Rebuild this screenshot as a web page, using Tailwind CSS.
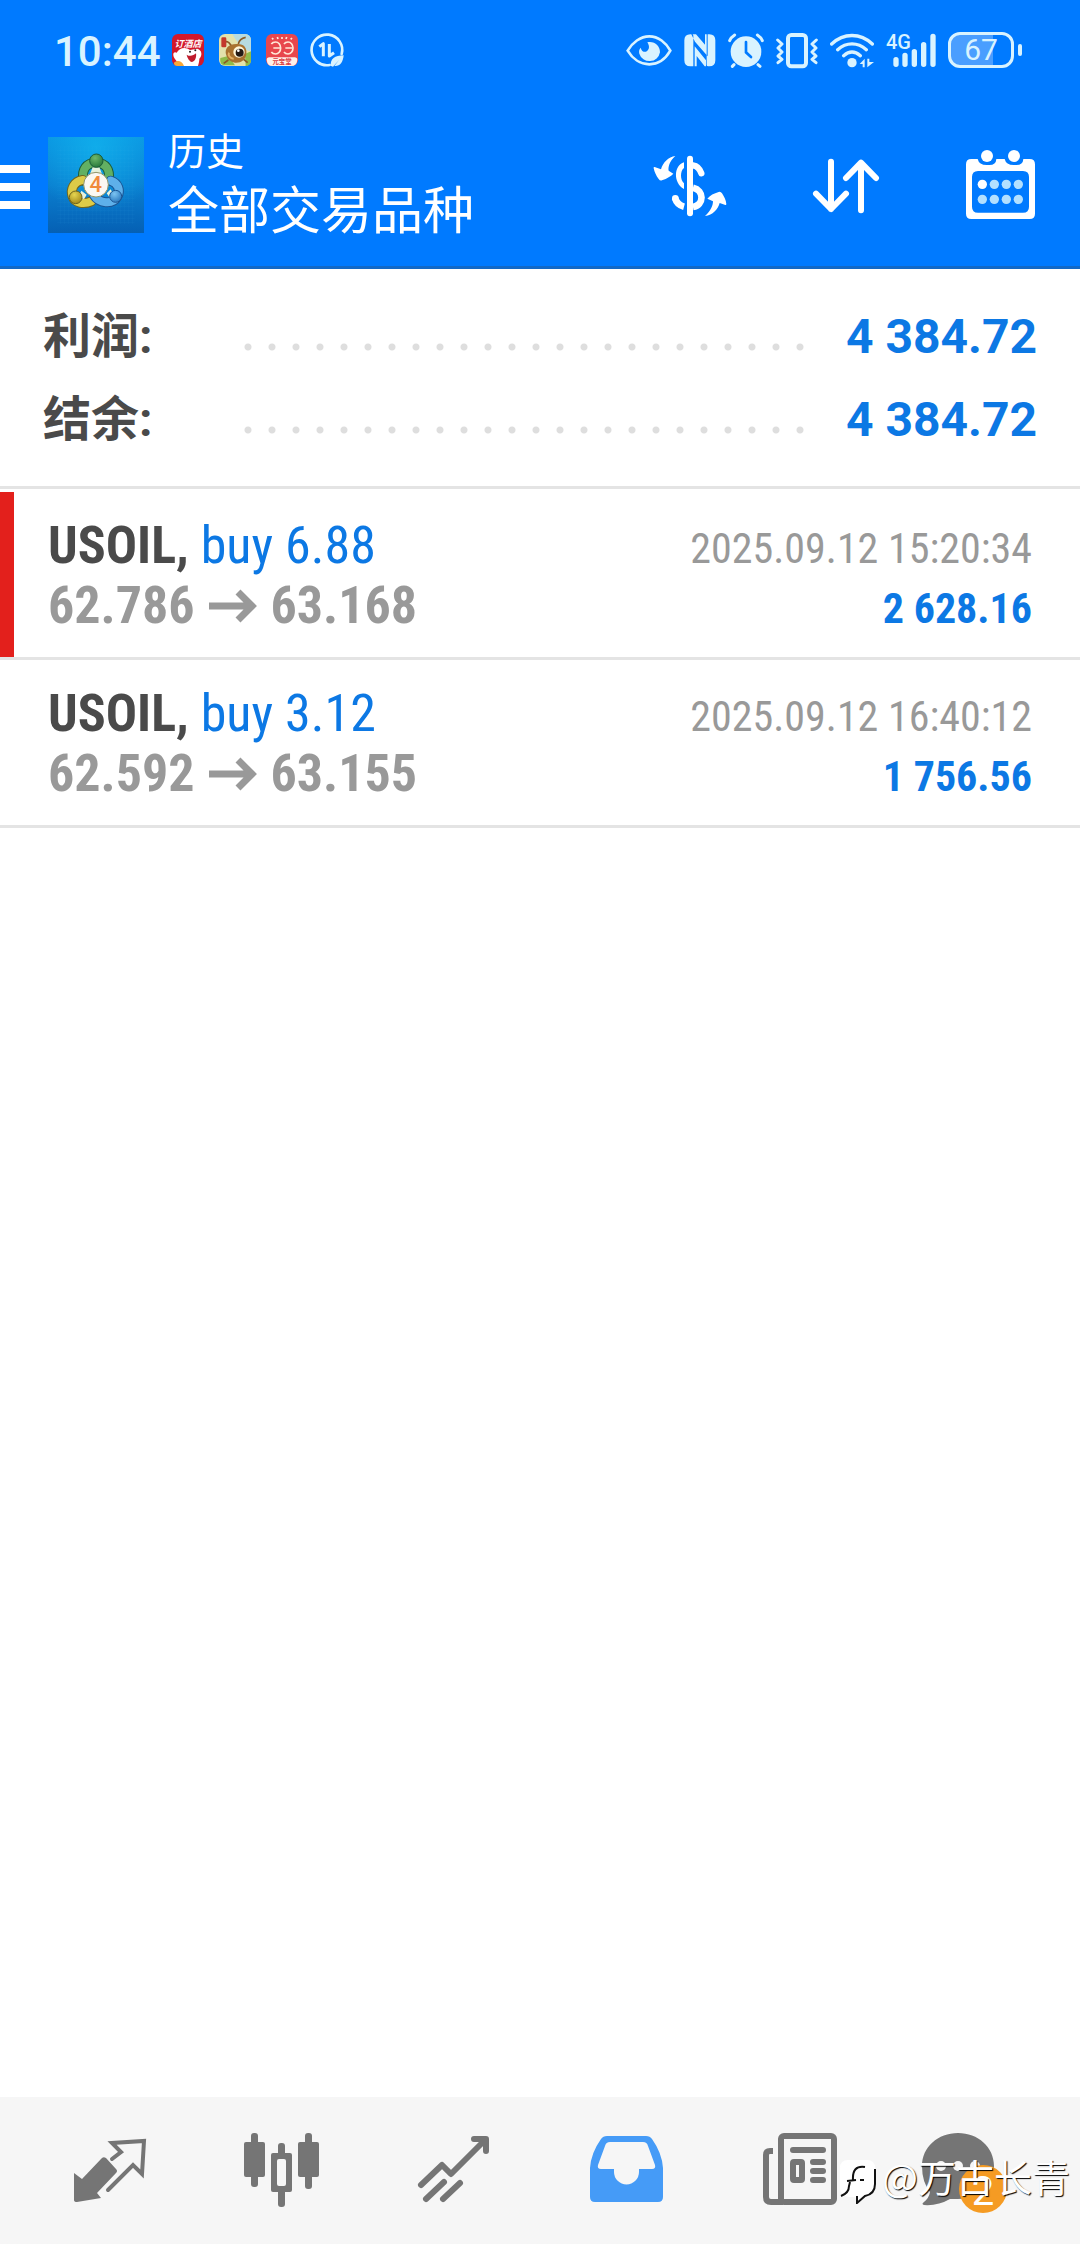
<!DOCTYPE html>
<html lang="zh-CN">
<head>
    <meta charset="UTF-8" />
    <meta name="viewport" content="width=device-width, initial-scale=1.0">
    <title>历史</title>
    <script src="https://cdn.jsdelivr.net/npm/@tailwindcss/browser@4"></script>
</head>
<body class="relative flex min-h-screen flex-col bg-white font-[Roboto,'Noto_Sans_CJK_SC',sans-serif] text-[#4a4a4a]">
    <header class="border-b-3 border-[#1269c7] bg-[#007aff] text-white">
        <!-- Status bar -->
        <div class="flex h-25 items-center justify-between pr-[58px] pl-[54px] text-[#d9f3ff]">
            <div class="flex items-center gap-[15px]">
                <span class="-mr-1 pt-1 text-[42px] leading-none font-medium">10:44</span>
                <svg class="size-8" viewBox="0 0 96 96">
                    <rect width="96" height="96" rx="18" fill="#d3182b" />
                    <text x="48" y="38" font-size="27" font-weight="700" font-style="italic" text-anchor="middle" fill="#fff">订酒店</text>
                    <path d="M14 56c8-16 28-18 40-8l22-4c14 4 16 20 6 30 0 8-2 14-4 22H22c-2-12-16-18-18-32-1-8 4-12 10-8z" fill="#fff" />
                    <path d="M44 62c8 6 20 4 28-4 2 12-2 24-12 26-8-2-14-12-16-22z" fill="#c01c2c" />
                    <circle cx="54" cy="53" r="3" fill="#222" /><circle cx="70" cy="49" r="3" fill="#222" />
                    <path d="M6 86c8-8 24-8 30 10H16C10 96 5 92 6 86z" fill="#f6a83a" />
                </svg>
                <svg class="size-8" viewBox="0 0 96 96">
                    <rect width="96" height="96" rx="18" fill="#e3e2ac" />
                    <path d="M40 0h38a18 18 0 0 1 18 18v34C76 50 56 30 40 0z" fill="#b7dbe0" />
                    <path d="M4 72l24-6 20 28H18C8 94 2 86 4 72zM78 60l18-8v28c0 8-6 16-16 16z" fill="#8fbb4a" />
                    <path d="M22 64c-8-22 10-36 34-34 20 0 28 12 26 30-2 18-18 28-34 26-14-2-22-10-26-22z" fill="#a8712f" />
                    <path d="M36 34c-8-12-14-14-20-8M58 30c2-10 10-18 22-20M28 78L14 88M74 76l12 10" stroke="#8a5a26" stroke-width="5" fill="none" />
                    <circle cx="60" cy="54" r="17" fill="#fff6d8" /><circle cx="62" cy="56" r="12" fill="#241a14" /><circle cx="58" cy="50" r="4" fill="#fff" />
                    <path d="M30 56c-4 8 4 18 14 18" stroke="#e2b063" stroke-width="6" fill="none" />
                    <rect x="7" y="10" width="15" height="30" rx="4" fill="#c3382c" />
                </svg>
                <svg class="size-8" viewBox="0 0 96 96">
                    <rect width="96" height="96" rx="18" fill="#e8474d" />
                    <g fill="none" stroke="#ffe9d8" stroke-width="5">
                        <path d="M16 30q4-6 13-6a15 18 0 0 1 0 36q-9 0-13-6M22 42h20M54 30q4-6 12-6a15 18 0 0 1 0 36q-8 0-12-6M58 42h20" />
                        <path d="M18 12l4 4M34 9l2 6M48 9v6M62 9l-2 6M78 12l-4 4" />
                    </g>
                    <path d="M2 78q0-8 8-8h76q8 0 8 8-2 18-18 18H18Q4 96 2 78z" fill="#fff0ea" />
                    <text x="48" y="90" font-size="19" font-weight="700" text-anchor="middle" fill="#d93a40">元宝堂</text>
                </svg>
                <svg class="-ml-1 size-9" viewBox="0 0 108 108" fill="none" stroke="currentColor">
                    <path d="M98 66a46 46 0 1 0-36 33" stroke-width="8" stroke-linecap="round" />
                    <path d="M31 44l12-9v38M61 36v36l14-10" stroke-width="9" stroke-linejoin="round" />
                    <path d="M66 102c-4-20 12-32 38-32-2 22-12 34-28 32l14-18-18 20z" fill="currentColor" stroke="none" />
                </svg>
            </div>
            <div class="flex items-center gap-3">
                <svg class="h-10 w-[46px]" viewBox="80 90 138 120" fill="none" stroke="currentColor">
                    <path d="M85 152c14-24 38-43 65-43s50 19 63 43c-14 24-36 41-63 41s-51-17-65-41z" stroke-width="8" />
                    <path d="M144 127c22-4 38 10 38 30a32 32 0 0 1-62 4c-2-8 0-14 4-18 2 10 10 14 16 12 10-4 12-16 4-28z" fill="currentColor" stroke="none" />
                </svg>
                <svg class="h-10 w-8" viewBox="254 90 96 120">
                    <path d="M273 103q-18 0-18 18v60q0 18 18 18h9v-92q0-4-4-4zM330 199q18 0 18-18v-60q0-18-18-18h-8v92q0 4 5 4zM276 103h14l27 31v-31h8v66l-38-44zM286 199V139l34 42v18h-4l-24-31v31z" fill="currentColor" />
                </svg>
                <svg class="h-10 w-9" viewBox="384 90 108 120" fill="none" stroke="currentColor" stroke-linecap="round">
                    <circle cx="438" cy="155" r="46" fill="currentColor" stroke="none" />
                    <path d="M389 122q4-10 15-17M487 122q-4-10-15-17M402 194l-5 5M474 194l6 5" stroke-width="9" />
                    <path d="M438 126v31l15 14" stroke="#007aff" stroke-width="8" />
                </svg>
                <svg class="h-10 w-[42px]" viewBox="528 90 126 120" fill="none" stroke="currentColor" stroke-linejoin="round" stroke-linecap="round">
                    <rect x="564" y="105" width="54" height="94" rx="10" stroke-width="12" />
                    <path d="M533 120l13 12-12 12 12 12-12 12 12 10-12 10M649 120l-13 12 12 12-12 12 12 12-12 10 12 10" stroke-width="9" />
                </svg>
                <svg class="h-10 w-11" viewBox="690 90 132 120" fill="none" stroke="currentColor" stroke-linecap="round">
                    <path d="M695 132c36-34 86-34 122 0M713 149c26-23 60-23 86 0M731 167c16-14 34-14 50 0" stroke-width="10" />
                    <circle cx="756" cy="188" r="14" fill="currentColor" stroke="none" />
                    <path d="M794 176v26h-6v-10h-9zM802 202v-26h6v10h14z" fill="currentColor" stroke="none" />
                </svg>
                <div class="relative h-10 w-[50px]">
                    <span class="absolute top-0.5 left-0 text-[20px] leading-5 font-medium">4G</span>
                    <svg class="h-10 w-[50px]" viewBox="858 90 150 120" stroke="currentColor" stroke-width="16" stroke-linecap="round">
                        <path d="M888 179v14M915 166v27M943 155v38M971 134v59M999 109v84" />
                    </svg>
                </div>
                <div class="flex items-center gap-1">
                    <span class="flex h-9 w-[66px] items-center justify-center rounded-[12px] border-3 border-current bg-linear-to-r from-[#4a9eff] from-70% to-transparent to-70% text-[30px] leading-none">67</span>
                    <span class="h-3 w-1 rounded-full bg-current"></span>
                </div>
            </div>
        </div>

        <!-- Toolbar -->
        <div class="flex h-[166px] items-center pt-1 pr-11">
            <button type="button" aria-label="菜单" class="flex flex-col gap-2.5 pt-1">
                <span class="h-2 w-[30px] bg-white"></span>
                <span class="h-2 w-[30px] bg-white"></span>
                <span class="h-2 w-[30px] bg-white"></span>
            </button>
            <svg class="ml-[18px] size-24" viewBox="12 21 288 288">
                <defs>
                    <linearGradient id="sky" x1="0" y1="0" x2="0" y2="1"><stop offset="0" stop-color="#0a93e0" /><stop offset="0.5" stop-color="#0a7fd0" /><stop offset="1" stop-color="#0560b4" /></linearGradient>
                    <radialGradient id="glow" cx="0.5" cy="0.1" r="0.7"><stop offset="0" stop-color="#12b8f0" stop-opacity="0.7" /><stop offset="1" stop-color="#12b8f0" stop-opacity="0" /></radialGradient>
                    <radialGradient id="green" cx="0.4" cy="0.3" r="0.8"><stop offset="0" stop-color="#6fb86a" /><stop offset="1" stop-color="#1f7034" /></radialGradient>
                    <radialGradient id="yellow" cx="0.4" cy="0.3" r="0.8"><stop offset="0" stop-color="#e6d550" /><stop offset="1" stop-color="#9c8216" /></radialGradient>
                    <radialGradient id="blue" cx="0.4" cy="0.3" r="0.8"><stop offset="0" stop-color="#7cc4f2" /><stop offset="1" stop-color="#2272ba" /></radialGradient>
                    <pattern id="grid" width="12" height="12" patternUnits="userSpaceOnUse"><path d="M0 0h12M0 0v12" stroke="#3bb4ee" stroke-opacity="0.25" /></pattern>
                </defs>
                <rect x="12" y="21" width="288" height="288" fill="url(#sky)" />
                <rect x="12" y="21" width="288" height="288" fill="url(#glow)" />
                <rect x="40" y="50" width="232" height="232" fill="url(#grid)" />
                <g fill="none" stroke-linecap="round">
                    <path d="M118 152c-6-34 10-54 38-54s44 20 38 54" stroke="#1c5c38" stroke-width="30" />
                    <path d="M118 152c-6-34 10-54 38-54s44 20 38 54" stroke="#62b062" stroke-width="24" />
                    <path d="M116 150c-26 4-38 28-30 50 8 20 34 24 56 14" stroke="#6f651e" stroke-width="30" />
                    <path d="M116 150c-26 4-38 28-30 50 8 20 34 24 56 14" stroke="#dccb48" stroke-width="24" />
                    <path d="M200 152c24 8 30 30 20 48-14 26-56 20-70-4" stroke="#1b5594" stroke-width="30" />
                    <path d="M200 152c24 8 30 30 20 48-14 26-56 20-70-4" stroke="#5eb0ea" stroke-width="24" />
                </g>
                <path d="M146 112h20l8 20h-36zM112 182l16 12-8 14-16-8zM200 178l-12 12 12 16 12-6z" fill="#e6f2dc" />
                <circle cx="157" cy="92" r="20" fill="url(#green)" stroke="#1c5c38" stroke-width="3" />
                <circle cx="95" cy="202" r="19" fill="url(#yellow)" stroke="#6f651e" stroke-width="3" />
                <circle cx="215" cy="199" r="18" fill="url(#blue)" stroke="#1b5594" stroke-width="3" />
                <circle cx="156" cy="164" r="37" fill="#fbf8f2" stroke="#8f9468" stroke-width="3" />
                <text x="155" y="187" text-anchor="middle" font-size="66" font-weight="500" fill="#f08a3c">4</text>
            </svg>
            <div class="ml-6 flex-1">
                <h1 class="text-[38px] leading-[54px]">历史</h1>
                <p class="text-[51px] leading-[66px]">全部交易品种</p>
            </div>
            <div class="flex items-center gap-20">
                <button type="button" aria-label="入金出金">
                    <svg class="h-18 w-20" viewBox="96 114 240 216" fill="none" stroke="currentColor">
                        <path d="M210 143v164" stroke-width="18" stroke-linecap="round" />
                        <path d="M192 154c-30 8-34 62 0 80v-17c-12-10-12-38 0-46z" fill="currentColor" stroke="none" />
                        <path d="M219 163c14 2 21 12 25 24" stroke-width="19" stroke-linecap="round" />
                        <path d="M219 230c34 8 34 52 0 58" stroke-width="20" />
                        <path d="M165 261c4 14 12 22 27 26" stroke-width="20" />
                        <circle cx="166" cy="262" r="10" fill="currentColor" stroke="none" />
                        <path d="M166 135c-18 16-22 34-20 44l14 9c-8 8-18 14-34 20q-6 2-10-4c-8-10-12-20-15-32q-1-6 5-3l17 6c6-20 22-38 43-40zM255 315c18-16 24-32 24-44l-17-8c8-10 20-16 34-20q6-2 10 4c6 10 12 20 13 32q0 4-5 2l-15-5c-6 20-20 36-44 39z" fill="currentColor" stroke="none" />
                    </svg>
                </button>
                <button type="button" aria-label="排序">
                    <svg class="size-18" viewBox="576 114 216 216" fill="none" stroke="currentColor" stroke-width="18" stroke-linecap="round" stroke-linejoin="round">
                        <path d="M633 152v142M588 248l45 46 45-46M723 298V156M678 201l45-46 45 46" />
                    </svg>
                </button>
                <button type="button" aria-label="选择日期">
                    <svg class="size-18" viewBox="1032 114 216 216" fill="currentColor">
                        <path fill-rule="evenodd" d="M1054 144h19q4 18 27 18h8q20 0 21-18h25q4 18 27 18h8q20 0 21-18h19q16 0 16 16v148q0 16-16 16h-175q-16 0-16-16V160q0-16 16-16zM1074 180q-18 0-18 18v89q0 18 18 18h135q18 0 18-18v-89q0-18-18-18z" />
                        <circle cx="1101" cy="135" r="18" /><circle cx="1182" cy="135" r="18" /><circle cx="1087" cy="220" r="14" />
                        <g fill="#b3e0ff">
                            <circle cx="1123" cy="220" r="14" /><circle cx="1159" cy="220" r="14" /><circle cx="1195" cy="220" r="14" />
                            <circle cx="1087" cy="265" r="14" /><circle cx="1123" cy="265" r="14" /><circle cx="1159" cy="265" r="14" /><circle cx="1195" cy="265" r="14" />
                        </g>
                    </svg>
                </button>
            </div>
        </div>
    </header>

    <main class="flex-1">
        <!-- Totals -->
        <dl class="border-b-3 border-[#e4e4e4] px-[43px] pt-[26px] pb-[25px] text-[48px] leading-[83px] font-bold">
            <div class="flex items-center">
                <dt class="w-[193px]">利润:</dt>
                <dd class="flex flex-1 items-center gap-8 text-[#0c78e4]">
                    <span class="mt-5 h-6 flex-1 bg-[radial-gradient(circle,#dedede_3px,transparent_4px)] bg-size-[24px_24px]"></span>
                    <span>4 384.72</span>
                </dd>
            </div>
            <div class="flex items-center">
                <dt class="w-[193px]">结余:</dt>
                <dd class="flex flex-1 items-center gap-8 text-[#0c78e4]">
                    <span class="mt-5 h-6 flex-1 bg-[radial-gradient(circle,#dedede_3px,transparent_4px)] bg-size-[24px_24px]"></span>
                    <span>4 384.72</span>
                </dd>
            </div>
        </dl>

        <!-- Closed trades -->
        <ul class="pt-[3px] font-['Roboto_Condensed',Roboto,sans-serif] leading-[57px]">
            <li class="flex h-42 border-b-3 border-[#e4e4e4]">
                <span class="w-3.5 bg-[#e3201c]"></span>
                <div class="flex-1 pt-[25px] pr-12 pl-[34px]">
                    <div class="flex items-baseline justify-between">
                        <p class="text-[52px]"><b class="font-bold">USOIL,</b> <span class="text-[#0c78e4]">buy 6.88</span></p>
                        <p class="text-[42px] text-[#999]">2025.09.12 15:20:34</p>
                    </div>
                    <div class="flex items-baseline justify-between font-bold">
                        <p class="flex items-center gap-3.5 text-[52px] text-[#999]">62.786
                            <svg class="h-9 w-12" viewBox="0 0 48 36" fill="none" stroke="currentColor" stroke-width="7"><path d="M0 18h43M29 4l14 14-14 14" /></svg>
                        63.168</p>
                        <p class="text-[42px] text-[#0c78e4]">2 628.16</p>
                    </div>
                </div>
            </li>
            <li class="flex h-42 border-b-3 border-[#e4e4e4]">
                <span class="w-3.5"></span>
                <div class="flex-1 pt-[25px] pr-12 pl-[34px]">
                    <div class="flex items-baseline justify-between">
                        <p class="text-[52px]"><b class="font-bold">USOIL,</b> <span class="text-[#0c78e4]">buy 3.12</span></p>
                        <p class="text-[42px] text-[#999]">2025.09.12 16:40:12</p>
                    </div>
                    <div class="flex items-baseline justify-between font-bold">
                        <p class="flex items-center gap-3.5 text-[52px] text-[#999]">62.592
                            <svg class="h-9 w-12" viewBox="0 0 48 36" fill="none" stroke="currentColor" stroke-width="7"><path d="M0 18h43M29 4l14 14-14 14" /></svg>
                        63.155</p>
                        <p class="text-[42px] text-[#0c78e4]">1 756.56</p>
                    </div>
                </div>
            </li>
        </ul>
    </main>

    <!-- Bottom tabs -->
    <nav class="grid h-[147px] grid-cols-6 justify-items-center bg-[#f6f6f6] px-6 pt-5 text-[#757575]">
        <a href="#quotes" aria-label="行情" class="size-24">
            <svg viewBox="0 0 96 96" fill="none" stroke="currentColor" stroke-width="4" stroke-linecap="round">
                <path d="M12 56l8 6 19-20q2-3 5-1l10 11q2 2 0 4L35 76l4 5-24 4q-3 0-3-2z" fill="currentColor" stroke="none" />
                <path d="M50 42l9-7-9-9 32-2-2 33-9-9-25 25" />
            </svg>
        </a>
        <a href="#charts" aria-label="图表" class="size-24">
            <svg viewBox="0 0 96 96" fill="currentColor">
                <rect x="10" y="25" width="21" height="35" rx="2" /><rect x="17" y="16" width="7" height="54" rx="3" />
                <rect x="64" y="25" width="21" height="35" rx="2" /><rect x="71" y="16" width="7" height="56" rx="3" />
                <rect x="37" y="36" width="21" height="39" rx="2" /><rect x="44" y="26" width="7" height="64" rx="3" />
                <rect x="43" y="42" width="9" height="27" rx="2" fill="#f6f6f6" />
            </svg>
        </a>
        <a href="#trade" aria-label="交易" class="size-24">
            <svg viewBox="0 0 96 96" fill="none" stroke="currentColor" stroke-width="6" stroke-linecap="round" stroke-linejoin="round">
                <path d="M15 68l21-20 9 9 34-34M68 22h12v12M38 65L20 82M54 66L37 82" />
            </svg>
        </a>
        <a href="#history" aria-label="历史" aria-current="page" class="size-24 text-[#459bf7]">
            <svg viewBox="0 0 96 96" fill="currentColor">
                <path fill-rule="evenodd" d="M29 19h39q4 0 6 3 10 14 11 29v29q0 5-5 5H17q-5 0-5-5V51q1-15 11-29 2-3 6-3zM32 25q-4 0-5 4l-7 19q-1 4 3 4h13v3a12 12 0 0 0 25 0v-3h13q4 0 3-4l-7-19q-1-4-5-4z" />
            </svg>
        </a>
        <a href="#news" aria-label="新闻" class="size-24">
            <svg viewBox="0 0 96 96" fill="none" stroke="currentColor" stroke-width="6">
                <rect x="31" y="19" width="53" height="66" rx="3" />
                <path d="M23 34h-3q-4 0-4 4v42q0 5 5 5h12" />
                <path d="M43 33h30M63 45h10M63 54h10M63 63h10" stroke-linecap="round" />
                <rect x="43" y="45" width="9" height="18" rx="1" />
            </svg>
        </a>
        <a href="#messages" aria-label="消息" class="relative size-24">
            <svg viewBox="0 0 96 96" fill="currentColor" class="overflow-visible">
                <path d="M36 16c20 0 36 14 36 33S56 82 36 82h-8Q16 89 2 88q-3-1 0-3 5-4 6-10Q0 65 0 49c0-19 16-33 36-33z" />
                <g fill="#f6f6f6"><circle cx="19" cy="49" r="5" /><circle cx="36" cy="49" r="5" /><circle cx="53" cy="49" r="5" /></g>
            </svg>
            <span class="absolute top-12 left-[37px] flex size-12 items-center justify-center rounded-full bg-[#f59b23] pt-1.5 text-[40px] leading-none text-white">2</span>
        </a>
    </nav>

    <!-- Author mark -->
    <div class="pointer-events-none absolute right-2.5 bottom-10 flex items-center gap-1.5 font-['Noto_Sans_CJK_SC',sans-serif] text-[38px] leading-[54px] text-white [text-shadow:1px_1px_1px_#000]">
        <svg class="mt-3 h-11 w-[37px]" viewBox="0 0 37 44">
            <path d="M9 0h19q8 0 8 8v16q0 10-10 12l-7 7-3-6Q1 38 1 28V8q0-8 8-8z" fill="#fff" />
            <path d="M36 9v15q0 10-10 12l-8 7v-7M2 36q8-3 8-10l1-4M26 7q-13-2-12 13M8 21l9-1M21 20h4" fill="none" stroke="#111" stroke-width="2" />
        </svg>
        <span>@万古长青</span>
    </div>
</body>
</html>
